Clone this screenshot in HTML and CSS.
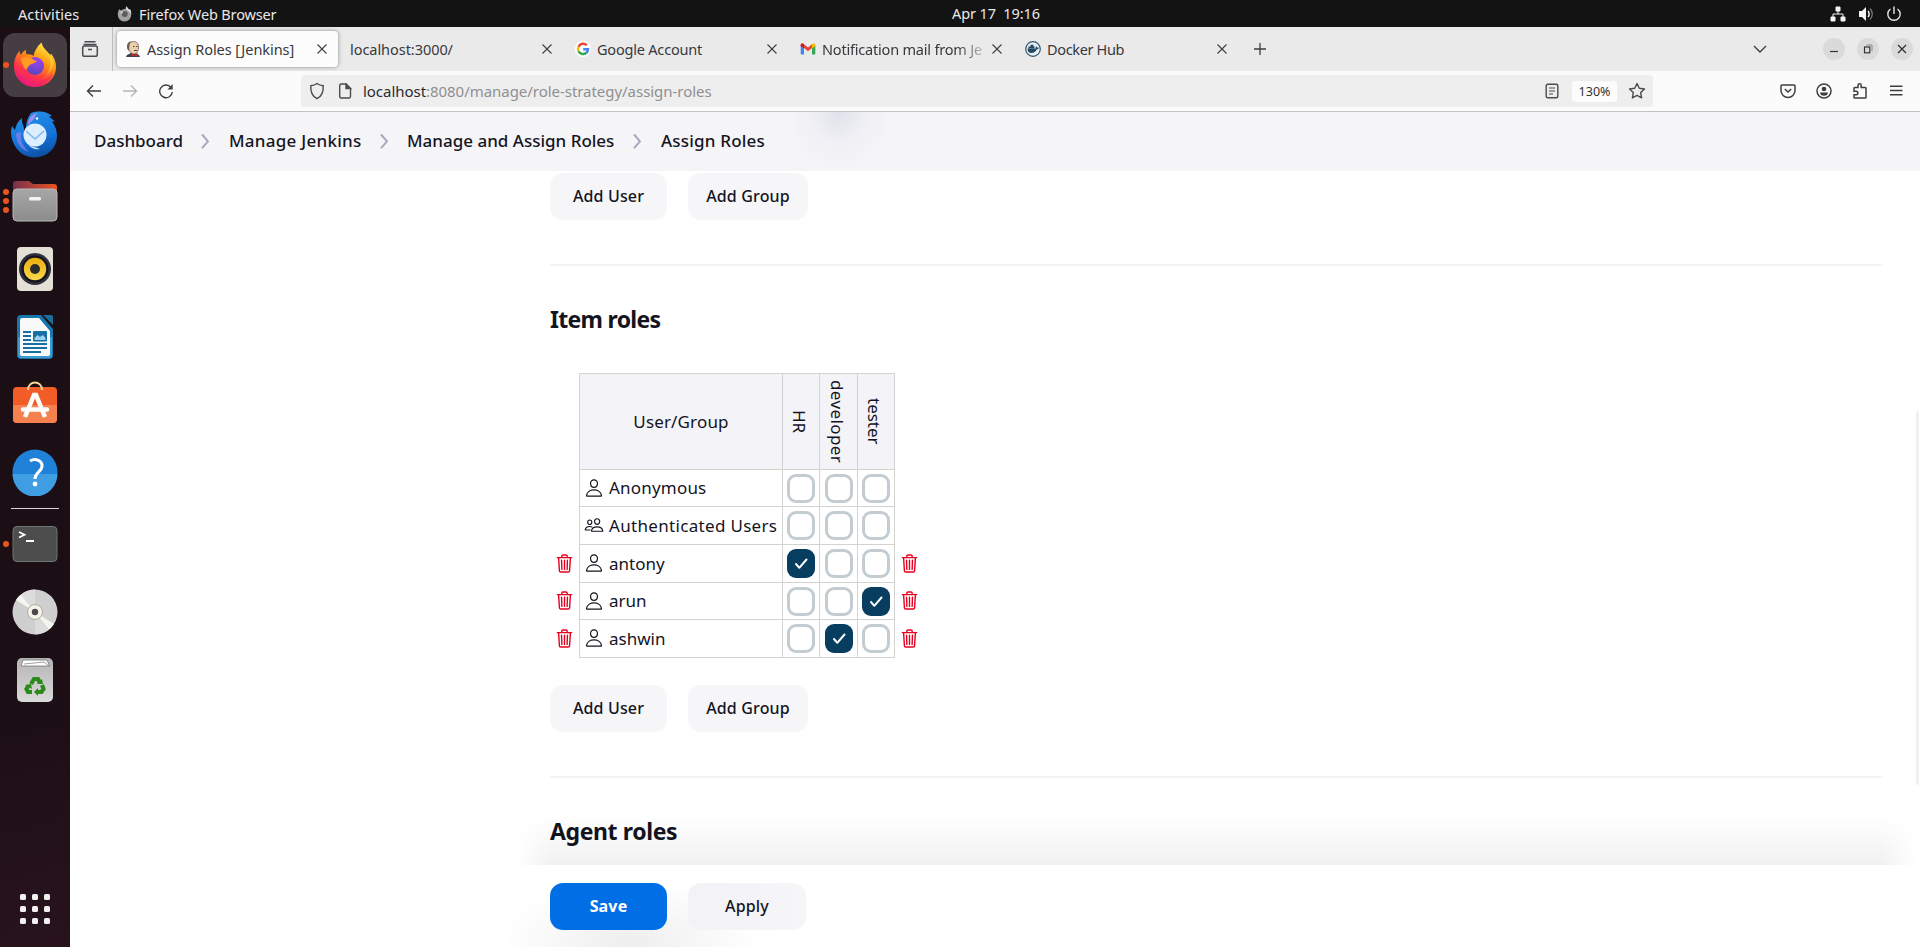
FILE: index.html
```html
<!DOCTYPE html>
<html lang="en">
<head>
<meta charset="utf-8">
<title>Assign Roles [Jenkins]</title>
<link rel="stylesheet" href="styles.css">
</head>
<body>
<svg class="defs" width="0" height="0">
  <defs>
    <symbol id="x" viewBox="0 0 16 16"><path d="M3.500 3.500l9 9M12.500 3.500l-9 9" fill="none" stroke="currentColor" stroke-width="1.100"/></symbol>
    <symbol id="person" viewBox="0 0 512 512"><path d="M344 144c-3.920 52.870-44 96-88 96s-84.150-43.120-88-96c-4-55 35-96 88-96s92 42 88 96zM256 304c-87 0-175.300 48-191.640 138.600C62.390 453.520 68.570 464 80 464h352c11.440 0 17.620-10.480 15.650-21.400C431.300 352 343 304 256 304z" fill="none" stroke="currentColor" stroke-width="30" stroke-linejoin="round"/></symbol>
    <symbol id="people" viewBox="0 0 512 512"><path d="M402 168c-2.930 40.670-33.100 72-66 72s-63.120-31.320-66-72c-3-42.310 26.370-72 66-72s69 30.460 66 72zM336 304c-65.170 0-127.840 32.370-143.540 95.410-2.080 8.340 3.150 16.590 11.720 16.590h263.650c8.570 0 13.770-8.250 11.720-16.590C463.850 335.360 401.180 304 336 304z" fill="none" stroke="currentColor" stroke-width="30"/><path d="M200 185.940c-2.340 32.480-26.720 58.060-53 58.060s-50.700-25.570-53-58.060C91.610 152.150 115.340 128 147 128s55.390 24.770 53 57.940zM206 306c-18.050-8.270-37.930-11.450-59-11.450-52 0-102.100 25.850-114.650 76.200-1.650 6.660 2.530 13.250 9.370 13.250H154" fill="none" stroke="currentColor" stroke-width="30" stroke-linecap="round"/></symbol>
    <symbol id="bin" viewBox="0 0 512 512"><path d="M112 112l20 320c.950 18.490 14.400 32 32 32h184c17.670 0 30.870-13.510 32-32l20-320M80 112h352M192 112V72a23.930 23.930 0 0124-24h80a23.930 23.930 0 0124 24v40M256 176v224M184 176l8 224M328 176l-8 224" fill="none" stroke="currentColor" stroke-width="34" stroke-linecap="round" stroke-linejoin="round"/></symbol>
    <symbol id="chev" viewBox="0 0 12 20"><path d="M2.500 4l5.500 6.300-5.500 6.300" fill="none" stroke="#a9a7bd" stroke-width="2" stroke-linecap="round" stroke-linejoin="round"/></symbol>
    <linearGradient id="ffg" x1=".8" y1="0" x2=".25" y2="1"><stop offset="0" stop-color="#fff44f"/><stop offset=".38" stop-color="#ff980e"/><stop offset=".7" stop-color="#ff3647"/><stop offset="1" stop-color="#e31587"/></linearGradient>
    <radialGradient id="ffp" cx=".6" cy=".2" r=".9"><stop offset="0" stop-color="#a340f0"/><stop offset="1" stop-color="#4b49b5"/></radialGradient>
    <linearGradient id="tbg" x1=".3" y1="0" x2=".6" y2="1"><stop offset="0" stop-color="#2490e8"/><stop offset=".6" stop-color="#1373d9"/><stop offset="1" stop-color="#0c4fa0"/></linearGradient>
    <linearGradient id="fold" x1="0" y1="0" x2="1" y2="0"><stop offset="0" stop-color="#77304f"/><stop offset="1" stop-color="#e9541f"/></linearGradient>
    <linearGradient id="gray" x1="0" y1="0" x2="0" y2="1"><stop offset="0" stop-color="#a7a7a7"/><stop offset="1" stop-color="#8b8b8b"/></linearGradient>
    <linearGradient id="gold" x1="0" y1="0" x2="0" y2="1"><stop offset="0" stop-color="#e9ae10"/><stop offset="1" stop-color="#f9d84a"/></linearGradient>
    <linearGradient id="lite" x1="0" y1="0" x2="0" y2="1"><stop offset="0" stop-color="#b4b4b4"/><stop offset="1" stop-color="#dadada"/></linearGradient>
  </defs>
</svg>

<header class="topbar">
  <span class="activities">Activities</span>
  <svg class="topfox" viewBox="0 0 16 16"><path d="M8 15.500A6.700 6.700 0 0 1 1.300 8.500C1.300 6 2 4 3.200 3l.6 1.500L5.500 4C7 3 8 3 9 3.200 9 2 9.500 1 10.300.3c.3 1.500 1.500 2.500 2.500 3.500l.7-.6c1 1.500 1.300 3.500 1.200 5.300A6.700 6.700 0 0 1 8 15.500z" fill="#a2a2a2"/><path d="M10.300.3c.3 1.500 1.500 2.500 2.500 3.500l.7-.6c1 1.500 1.300 3.500 1.200 5.300-.5-2.500-3-3.500-5-5 0-1.200 0-2 .6-3.200z" fill="#e0e0e0"/><circle cx="8.300" cy="8" r="2.900" fill="#5c5c5c"/><path d="M3 5l4 .8-2 2.200z" fill="#ccc"/></svg>
  <span class="appname">Firefox Web Browser</span>
  <span class="clock">Apr 17&nbsp; 19:16</span>
  <span class="tray">
    <svg width="16" height="16" viewBox="0 0 16 16"><path d="M6 1h4v4H6zM1 11h4v4H1zM11 11h4v4h-4z" fill="#f5f5f5" stroke="#f5f5f5" stroke-width="1" stroke-linejoin="round"/><path d="M8 5v3M3 11V8h10v3" fill="none" stroke="#f5f5f5"/></svg>
    <svg width="16" height="16" viewBox="0 0 16 16"><path d="M1 5h3l4-4v14l-4-4H1z" fill="#f5f5f5"/><path d="M10 5c1.500 1.500 1.500 4.500 0 6" fill="none" stroke="#f5f5f5" stroke-width="1.500"/><path d="M12 2.500c3 3 3 8 0 11" fill="none" stroke="#777" stroke-width="1.300"/></svg>
    <svg width="16" height="16" viewBox="0 0 16 16"><path d="M4.500 3a6.200 6.200 0 1 0 7 0M8 .5v7.500" fill="none" stroke="#e8e8e8" stroke-width="1.400"/></svg>
  </span>
</header>

<div class="desktop">
  <nav class="dock">
    <div class="slot active"><i class="dots"><b></b></i>
      <svg viewBox="0 0 48 48"><path d="M24 46C12 46 3 37 3 25.500 3 19 5 13.500 8.500 10c.3 2 .8 3 1.500 4 1.500-3 3.500-4.500 5-5-.5 2 0 3.500 1 4.500 3-.5 5 .5 6.500 1.500 1-5 3.500-9.500 8-13.500 1 5 4.500 7.500 7.500 11l1 2.500 1-2.500c3 4 5 8 5 13C45 37 36 46 24 46z" fill="url(#ffg)"/><path d="M37 13c4 7 3 15-1 20 6-4 9-12 3-20z" fill="#ffd33a" opacity=".7"/><circle cx="24" cy="25" r="9" fill="url(#ffp)"/><path d="M10 17c5-2 10-1 13 2 2 1 3 1 2 2-2 2-5 1-7 4-1 1-2 2-3 4-3-3-5-8-5-12z" fill="#ff9a22"/><path d="M6 30c4 11 25 16 36 2-3 9-10 13-18 13S9 40 6 30z" fill="#ee2070" opacity=".55"/></svg></div>
    <div class="slot"><svg class="bird" viewBox="0 0 48 48"><path d="M20 2c9-3 17-1 21 3l-3 .5 6 5-3 0c7 9 6 20 1 27-9 12-29 12-37-1C0 29-1 22 1 15l3 4c1-5 3-9 7-12-1 6 3 8 2 13l2 3c-1-8 1-16 5-21z" fill="url(#tbg)"/><path d="M17 14c0-7 4-11 10-12-4 3-3 6-6 8z" fill="#a48df0"/><circle cx="26" cy="7.500" r="1.200" fill="#fff"/><path d="M5 22c0 10 5 17 13 19-6-5-9-12-8-20z" fill="#8b83ee" opacity=".7"/><circle cx="24" cy="24" r="11.500" fill="#dceeff"/><path d="M15 20l9 8 9-8" fill="none" stroke="#7fb6ea" stroke-width="1.500"/><path d="M17 33c4 3 8 3 12 5-5 1-10-1-12-5z" fill="#b8dcfb"/></svg></div>
    <div class="slot"><i class="dots"><b></b><b></b><b></b></i><svg viewBox="0 0 48 48"><path d="M2 20V7a3 3 0 0 1 3-3h13l4 3h21a3 3 0 0 1 3 3v12z" fill="url(#fold)"/><rect x="2" y="12" width="44" height="32" rx="4" fill="url(#gray)" stroke="#b9b9b9"/><rect x="18" y="20" width="12" height="3.500" rx="1.500" fill="#f4f4f4"/></svg></div>
    <div class="slot"><svg viewBox="0 0 48 48"><rect x="6" y="2" width="36" height="44" rx="4" fill="#e4e0d6"/><circle cx="24" cy="24" r="16" fill="#30303a"/><circle cx="24" cy="24" r="13.500" fill="#141420"/><circle cx="24" cy="24" r="11.200" fill="url(#gold)"/><circle cx="24" cy="24" r="5" fill="#2c2c2c"/></svg></div>
    <div class="slot"><svg viewBox="0 0 48 48"><path d="M10 2h20l12 14v26a4 4 0 0 1-4 4H10a4 4 0 0 1-4-4V6a4 4 0 0 1 4-4z" fill="#1577ae"/><path d="M7 24h34v18a3 3 0 0 1-3 3H10a3 3 0 0 1-3-3z" fill="#3c9bcf"/><path d="M32 2h8a2 2 0 0 1 2 2v8z" fill="#1a6d9f"/><path d="M11 5h17l11 13v23a2 2 0 0 1-2 2H11a2 2 0 0 1-2-2V7a2 2 0 0 1 2-2z" fill="#f7f9fa"/><path d="M12 19h8M12 23h8M12 27h8M12 31h24M12 35h24M12 39h18" stroke="#1670a4" stroke-width="1.900"/><rect x="22" y="18" width="14" height="10.500" rx="1" fill="#1670a4"/><path d="M23.500 27v-2l3-3 2.500 2 3-2 2.500 3v2z" fill="#9fd2f0"/></svg></div>
    <div class="slot"><svg class="bag" viewBox="0 0 48 48"><rect x="2" y="8" width="44" height="36" rx="4" fill="#f15c27"/><path d="M2 26h44v14a4 4 0 0 1-4 4H6a4 4 0 0 1-4-4z" fill="#f4814e"/><path d="M17 11c0-10 14-10 14 0" fill="none" stroke="#f4d596" stroke-width="2"/><path d="M14 38l9-22h2l9 22" fill="none" stroke="#fff" stroke-width="4.500"/><path d="M12 30.500h24" stroke="#fff" stroke-width="4.500" stroke-linecap="round"/></svg></div>
    <div class="slot"><svg class="help" viewBox="0 0 48 48"><circle cx="24" cy="24" r="22.500" fill="#1f82d8"/><path d="M1.500 26h45a22.500 22.500 0 0 1-45 0z" fill="#3f9de2"/><path d="M19 13c5-3 12-1 12 5 0 6-7 6-7 13" fill="none" stroke="#fff" stroke-width="3"/><circle cx="24" cy="36" r="2.400" fill="#fff"/></svg></div>
    <hr>
    <div class="slot"><i class="dots"><b></b></i><svg viewBox="0 0 48 48"><rect x="2" y="6.500" width="44" height="35" rx="4" fill="#4d4d4d" stroke="#6f756f"/><path d="M8 12l5.500 2.700L8 17.500M15 21h8" fill="none" stroke="#fff" stroke-width="1.800"/></svg></div>
    <div class="slot"><svg viewBox="0 0 48 48"><circle cx="24" cy="24" r="22.500" fill="#cfcfcf"/><path d="M24 24L5 12A22.500 22.500 0 0 1 10 6.500zM24 24l19 12a22 22 0 0 1-5 5.500z" fill="#f5f5f0"/><path d="M24 24V1.500A22.500 22.500 0 0 0 10 6.500zM24 24v22.500a22.500 22.500 0 0 0 14-5z" fill="#dcdcdc"/><circle cx="24" cy="24" r="7.500" fill="#f4f2ec" stroke="#b5ab92"/><circle cx="24" cy="24" r="3.200" fill="#4a4a4a"/></svg></div>
    <div class="slot"><svg viewBox="0 0 48 48"><rect x="6" y="2" width="36" height="44" rx="5" fill="url(#lite)"/><path d="M10 10l2-6h24l2.500 6z" fill="#fff" stroke="#777" stroke-width=".8"/><path d="M13 8l20-2 5 4" fill="none" stroke="#888" stroke-width=".8"/><g fill="none" stroke="#2c8a1d" stroke-width="4.200"><path d="M20 28l3-5h4l2 4M31 29l1.500 4-2 3H25M21 36h-4l-1.500-3 2-3.500"/></g><path d="M26 28l6 0-1-5zM27 32v8l-4-4zM14 29l6-1 1 5z" fill="#2c8a1d"/></svg></div>
    <svg class="apps" viewBox="0 0 30 30"><g fill="#f2f1ef"><rect width="6" height="6" rx="1.500"/><rect x="12" width="6" height="6" rx="1.500"/><rect x="24" width="6" height="6" rx="1.500"/><rect y="12" width="6" height="6" rx="1.500"/><rect x="12" y="12" width="6" height="6" rx="1.500"/><rect x="24" y="12" width="6" height="6" rx="1.500"/><rect y="24" width="6" height="6" rx="1.500"/><rect x="12" y="24" width="6" height="6" rx="1.500"/><rect x="24" y="24" width="6" height="6" rx="1.500"/></g></svg>
  </nav>

  <div class="window">
    <div class="tabstrip">
      <div class="tabview"><svg width="18" height="18" viewBox="0 0 18 18" fill="none" stroke="#4b4b50" stroke-width="1.500"><path d="M3.500 1.800h11M2.500 4.600h13"/><rect x="1.700" y="6" width="14.600" height="10.300" rx="1.800"/><path d="M7 9.500h4"/></svg></div>
      <div class="tab selected">
        <svg class="fav" viewBox="0 0 16 16"><path d="M1 16l1-2 4-2h5l3 2 1 2z" fill="#39414f"/><path d="M3 6c0-3 2-5.500 5.500-5.500S14 3 13.500 7s-2 6-4.500 6-5-2-6-7z" fill="#e9cfae" stroke="#5b4a3c" stroke-width=".7"/><path d="M2 6C2 2 4 .7 6 .6 4.500 2 4.500 5 4 9.500 3 9.500 2 8 2 6z" fill="#6b5d52"/><path d="M6.500 12.500l3 1 3-1v3l-3-1-3 1z" fill="#cf2a2a"/><path d="M8 5.500h1.500M11 5.500h1.500M9 9.500h3" stroke="#453326" stroke-width=".9"/></svg>
        <span class="label t1">Assign Roles [Jenkins]</span><svg class="close"><use href="#x"/></svg></div>
      <div class="tab"><span class="label t2">localhost:3000/</span><svg class="close"><use href="#x"/></svg></div>
      <div class="tab">
        <svg class="fav" viewBox="0 0 16 16"><circle cx="8" cy="8" r="8" fill="#fff"/><g fill="none" stroke-width="2.500"><path d="M11.800 4.200A5.100 5.100 0 0 0 3.500 5.700" stroke="#ea4335"/><path d="M3.500 5.700a5.100 5.100 0 0 0 0 4.600" stroke="#fbbc05"/><path d="M3.500 10.300a5.100 5.100 0 0 0 7.900 1.500" stroke="#34a853"/><path d="M11.400 11.800A5 5 0 0 0 13 8.300H8.200" stroke="#4285f4"/></g></svg>
        <span class="label t3">Google Account</span><svg class="close"><use href="#x"/></svg></div>
      <div class="tab">
        <svg class="fav" viewBox="0 0 16 16"><path d="M.7 4v8.500a1 1 0 0 0 1 1H4V6z" fill="#4285f4"/><path d="M15.300 4v8.500a1 1 0 0 1-1 1H12V6z" fill="#34a853"/><path d="M.7 4C.7 2.500 2.300 2 3.300 2.800L8 6.400l4.700-3.600L12 7 8 10.200 4 7 .7 5z" fill="#ea4335"/><path d="M12 3.300l.7-.5c1-.8 2.600-.3 2.600 1.200v1L12 7.500z" fill="#fbbc04"/><path d="M.7 4c0-1.500 1.600-2 2.600-1.200l.7.500v4.200L.7 5z" fill="#c5221f"/></svg>
        <span class="label t4">Notification mail from Je</span><svg class="close"><use href="#x"/></svg></div>
      <div class="tab">
        <svg class="fav" viewBox="0 0 16 16"><circle cx="8" cy="8" r="7.300" fill="#e6eef2" stroke="#31566d" stroke-width="1.200"/><path d="M2.500 7.500h8.300c.2-.8 0-1.500-.3-2 .8-.3 1.500.3 1.700 1.200.7-.2 1.300 0 1.600.2-.4 1-1.300 1.300-2 1.300-1 2.600-3 3.800-5.300 3.800-2.500 0-4-1.200-4-4.500z" fill="#204a62"/><path d="M3.500 5.500h6v2h-6zM5.500 3.800h3v1.700h-3z" fill="#204a62"/></svg>
        <span class="label t5">Docker Hub</span><svg class="close"><use href="#x"/></svg></div>
      <svg class="plus" width="16" height="16" viewBox="0 0 16 16"><path d="M8 2v12M2 8h12" stroke="#3e3e42" stroke-width="1.300"/></svg>
      <svg class="alltabs" width="16" height="16" viewBox="0 0 16 16"><path d="M2 5l6 6 6-6" fill="none" stroke="#3e3e42" stroke-width="1.400"/></svg>
      <div class="winbtns">
        <span><svg width="12" height="12" viewBox="0 0 12 12"><path d="M2 8.500h8" stroke="#333" stroke-width="1.200"/></svg></span>
        <span><svg width="12" height="12" viewBox="0 0 12 12"><path d="M4.500 2h5.500v6" fill="none" stroke="#888"/><rect x="2.500" y="4" width="5.300" height="5.800" fill="none" stroke="#333" stroke-width="1.200"/></svg></span>
        <span><svg width="12" height="12" viewBox="0 0 12 12"><path d="M2 2l8 8M10 2l-8 8" stroke="#333" stroke-width="1.300"/></svg></span>
      </div>
    </div>

    <div class="toolbar">
      <div class="navbtns">
        <svg viewBox="0 0 16 16"><path d="M15 8H2M7 2.500L1.500 8 7 13.500" stroke="#3e3e42"/></svg>
        <svg viewBox="0 0 16 16"><path d="M1 8h13M9 2.500L14.500 8 9 13.500" stroke="#b4b4b6"/></svg>
        <svg viewBox="0 0 16 16"><path d="M13 4.500A6.300 6.300 0 1 0 14.300 9" stroke="#3e3e42"/><path d="M14.700 1v5.500H9.500z" fill="#3e3e42" stroke="none"/></svg>
      </div>
      <div class="urlbar">
        <svg class="shield" width="16" height="18" viewBox="0 0 16 18"><path d="M8 1.500c2 1.500 4 2 6.200 2.200.4 6-1.200 10.500-6.200 13-5-2.500-6.600-7-6.200-13C4 3.500 6 3 8 1.500z"/></svg>
        <svg class="page" width="14" height="16" viewBox="0 0 14 16"><path d="M1.700 2.500a1.500 1.500 0 0 1 1.500-1.500H8l4.500 4.500v8a1.500 1.500 0 0 1-1.500 1.500H3.200a1.500 1.500 0 0 1-1.500-1.500z"/><path d="M8 1v4.500h4.500z" fill="#4b4b50"/></svg>
        <span class="url"><b>localhost</b>:8080/manage/role-strategy/assign-roles</span>
        <svg class="reader" width="14" height="16" viewBox="0 0 14 16"><rect x="1.200" y="1.200" width="11.600" height="13.600" rx="1.500"/><path d="M4 5h6M4 8h6M4 11h4" stroke-width="1.200"/></svg>
        <span class="zoom">130%</span>
        <svg class="star" width="18" height="18" viewBox="0 0 18 18"><path d="M9 1.500l2.300 4.800 5.200.7-3.800 3.600.9 5.300L9 13.400l-4.600 2.500.9-5.300L1.500 7l5.200-.7z" stroke-linejoin="round"/></svg>
      </div>
      <div class="tools">
        <svg viewBox="0 0 16 16"><path d="M2 2h12a1 1 0 0 1 1 1v4.500a7 7 0 0 1-14 0V3a1 1 0 0 1 1-1zM4.800 6L8 9l3.200-3"/></svg>
        <svg viewBox="0 0 16 16"><circle cx="8" cy="8" r="7"/><circle cx="8" cy="6" r="2.300" fill="#3e3e42" stroke="none"/><path d="M4 9.500h8c0 2-1.700 3.300-4 3.300S4 11.500 4 9.500z" fill="#3e3e42" stroke="none"/></svg>
        <svg viewBox="0 0 16 16"><path d="M2 7.200V5.300a.8.800 0 0 1 .8-.8H6V2.400a1.600 1.600 0 0 1 3.200 0v2.100h4a.8.800 0 0 1 .8.800v8.900a.8.800 0 0 1-.8.800H2.800a.8.800 0 0 1-.8-.8v-2.500h2.100a1.600 1.600 0 0 0 0-3.500H2z"/></svg>
        <svg viewBox="0 0 16 16"><path d="M2 3.200h12.500M2 7.500h12.500M2 11.800h12.500"/></svg>
      </div>
    </div>

    <div class="crumbs">
      <span class="c1">Dashboard</span><svg><use href="#chev"/></svg>
      <span class="c2">Manage Jenkins</span><svg><use href="#chev"/></svg>
      <span class="c3">Manage and Assign Roles</span><svg><use href="#chev"/></svg>
      <span class="c4">Assign Roles</span>
    </div>

    <main class="content">
      <div class="btnrow"><button class="user">Add User</button><button class="group">Add Group</button></div>
      <section>
        <h2 class="h-item">Item roles</h2>
        <div class="matrix">
          <div class="side"></div><div class="th ug">User/Group</div><div class="th v">HR</div><div class="th v dev">developer</div><div class="th v">tester</div><div class="side r"></div>
          <div class="side"></div><div class="td"><svg><use href="#person"/></svg><span class="n1">Anonymous</span></div><div class="cb"><i></i></div><div class="cb"><i></i></div><div class="cb"><i></i></div><div class="side r"></div>
          <div class="side"></div><div class="td"><svg><use href="#people"/></svg><span class="n2">Authenticated Users</span></div><div class="cb"><i></i></div><div class="cb"><i></i></div><div class="cb"><i></i></div><div class="side r"></div>
          <div class="side"><svg><use href="#bin"/></svg></div><div class="td"><svg><use href="#person"/></svg><span class="n3">antony</span></div><div class="cb"><i class="on"><svg viewBox="0 0 28 28"><path d="M9 15l3.300 3.800 7.200-8.300"/></svg></i></div><div class="cb"><i></i></div><div class="cb"><i></i></div><div class="side r"><svg><use href="#bin"/></svg></div>
          <div class="side"><svg><use href="#bin"/></svg></div><div class="td"><svg><use href="#person"/></svg><span class="n4">arun</span></div><div class="cb"><i></i></div><div class="cb"><i></i></div><div class="cb"><i class="on"><svg viewBox="0 0 28 28"><path d="M9 15l3.300 3.800 7.200-8.300"/></svg></i></div><div class="side r"><svg><use href="#bin"/></svg></div>
          <div class="side"><svg><use href="#bin"/></svg></div><div class="td last"><svg><use href="#person"/></svg><span class="n5">ashwin</span></div><div class="cb last"><i></i></div><div class="cb last"><i class="on"><svg viewBox="0 0 28 28"><path d="M9 15l3.300 3.800 7.200-8.300"/></svg></i></div><div class="cb last"><i></i></div><div class="side r"><svg><use href="#bin"/></svg></div>
        </div>
        <div class="btnrow second"><button class="user">Add User</button><button class="group">Add Group</button></div>
      </section>
      <section><h2 class="h-agent">Agent roles</h2></section>
      <div class="footer"><button class="save">Save</button><button class="apply">Apply</button></div>
      <div class="scroll"></div>
    </main>
  </div>
</div>
</body>
</html>
```
FILE: styles.css
```css
* { box-sizing: border-box; }
body { margin: 0; width: 1920px; height: 947px; overflow: hidden; background: #fff; color: #14141f; font-family: "Noto Sans", "Open Sans", sans-serif; font-size: 14px; }
svg { display: block; flex: none; }
.defs { position: absolute; }

.topbar { position: relative; display: flex; align-items: center; height: 27px; background: #131313; color: #e9e9e9; padding: 0 18px; font-size: 14.5px; white-space: nowrap; }
.activities { width: 98px; letter-spacing: 0.1px; }
.appname { letter-spacing: -0.15px; }
.topfox { width: 17px; height: 16px; margin-right: 6px; }
.clock { position: absolute; left: 952px; top: 3px; letter-spacing: -0.1px; }
.tray { display: flex; gap: 12px; margin-left: auto; }

.desktop { display: flex; height: 920px; }
.dock { width: 70px; background: linear-gradient(165deg, #1b0e15 70%, #28131d); display: flex; flex-direction: column; align-items: center; padding-top: 4px; }
.slot { position: relative; width: 64px; height: 64px; margin: 2px 0; border-radius: 12px; display: flex; align-items: center; justify-content: center; }
.slot.active { background: #463d42; }
.slot svg { width: 48px; height: 48px; }
.slot .bird { margin-top: 3px; }
.slot .bag { margin-bottom: 5px; }
.slot .help { margin-bottom: 2px; }
.dots { position: absolute; left: 0; top: 0; bottom: 0; width: 6px; display: flex; flex-direction: column; justify-content: center; gap: 3px; }
.dots b { width: 6px; height: 6px; border-radius: 50%; background: #e95420; }
.dock hr { width: 48px; height: 1px; margin: 1px 0; border: 0; background: #d9d6d8; flex: none; }
.apps { width: 30px; height: 30px; margin-top: auto; margin-bottom: 23px; }

.window { width: 1850px; display: flex; flex-direction: column; }
.tabstrip { display: flex; align-items: center; height: 44px; background: #eaeaea; color: #38383d; }
.tabview { width: 43px; height: 44px; border-right: 1px solid #bcbcbc; margin-right: 2px; display: flex; align-items: center; padding-left: 11px; }
.tab { display: flex; align-items: center; height: 36px; width: 221px; margin: 0 2px; padding: 0 8px; }
.tab.selected { background: #fcfcfc; border-radius: 4px; box-shadow: 0 0 4px rgba(0,0,0,.4); }
.fav { width: 16px; height: 16px; margin: 0 6px 0 0; }
.label { flex: 1; min-width: 0; white-space: nowrap; font-size: 14.5px; letter-spacing: -0.05px; }
.close { width: 16px; height: 16px; color: #3e3e42; }
.t3 { letter-spacing: -0.2px; }
.t4 { letter-spacing: -0.2px; -webkit-mask-image: linear-gradient(90deg, #000 80%, transparent 102%); mask-image: linear-gradient(90deg, #000 80%, transparent 102%); }
.t5 { letter-spacing: -0.35px; }
.plus { margin-left: 12px; }
.alltabs { margin-left: 484px; }
.winbtns { display: flex; gap: 12px; margin-left: 55px; }
.winbtns span { width: 22px; height: 22px; border-radius: 50%; background: #dadada; display: flex; align-items: center; justify-content: center; }

.toolbar { display: flex; align-items: center; height: 41px; background: #fbfbfb; border-bottom: 1px solid #c2c2c5; }
.navbtns { display: flex; gap: 20px; padding-left: 16px; width: 231px; }
.navbtns svg { width: 16px; height: 16px; fill: none; stroke-width: 1.4; }
.urlbar { width: 1352px; height: 32px; background: #eee; border-radius: 4px; display: flex; align-items: center; padding-left: 8px; }
.urlbar svg { fill: none; stroke: #4b4b50; stroke-width: 1.4; }
.page { margin-left: 13px; }
.url { margin-left: 11px; color: #8f8f93; font-size: 15px; letter-spacing: -0.04px; }
.url b { font-weight: 400; color: #2a2a2e; }
.reader { margin-left: auto; }
.zoom { width: 45px; height: 21px; margin: 0 11px 0 13px; border-radius: 3px; background: #fcfcfc; font-size: 12.5px; line-height: 21px; text-align: center; color: #333; }
.star { margin-right: 7px; }
.tools { display: flex; gap: 20px; margin-left: auto; padding-right: 16px; }
.tools svg { width: 16px; height: 16px; fill: none; stroke: #3e3e42; stroke-width: 1.5; }

.crumbs { display: flex; align-items: center; height: 59px; flex: none; padding: 0 0 2px 24px; background: radial-gradient(ellipse 52px 58px at 769px 0, #dfe2e9, rgba(233,234,241,.5) 50%, transparent), #f5f5f8; font-size: 17px; font-weight: 500; white-space: nowrap; }
.crumbs svg { width: 12px; height: 20px; }
.crumbs .c1 { width: 106px; }
.crumbs svg + span { margin-left: 17px; }
.crumbs .c2 { width: 150px; letter-spacing: 0.26px; }
.crumbs .c3 { width: 224px; margin-left: 16px; margin-right: 1px; }
.crumbs .c4 { letter-spacing: 0.2px; }

.content { position: relative; height: 776px; padding: 2px 37px 0 480px; }
button { border: 0; height: 47px; border-radius: 13px; background: #f6f6f9; color: #14141f; font: 500 16px "Noto Sans", "Open Sans", sans-serif; letter-spacing: 0.15px; padding: 0 0 2px; }
.btnrow { display: flex; gap: 21px; height: 91px; }
.user, .save { width: 117px; }
.group { width: 120px; }
.apply { width: 118px; }
section { border-top: 2px solid #f3f3f8; }
h2 { margin: 36px 0 0; height: 35px; line-height: 35px; font-size: 23px; font-weight: 700; }
.h-item { letter-spacing: -0.7px; }
.h-agent { letter-spacing: -0.38px; }
.matrix { display: grid; width: max-content; margin-top: 36px; grid-template-columns: 29px 203px 37px 38px 37px 30px; grid-template-rows: 96px 37px 38px 38px 37px 39px; font-size: 17px; }
.th, .td, .cb { border-left: 1px solid #d3d4cf; border-top: 1px solid #d3d4cf; display: flex; align-items: center; }
.last { border-bottom: 1px solid #d3d4cf; }
.th { background: #f3f3f8; justify-content: center; }
.ug { letter-spacing: 0.15px; }
.v { writing-mode: vertical-rl; padding-right: 3px; }
.dev { letter-spacing: 0.4px; }
.td { padding-left: 4px; padding-bottom: 1px; white-space: nowrap; }
.td svg { width: 20px; height: 20px; margin-right: 5px; }
.n1 { letter-spacing: 0.2px; }
.n2 { letter-spacing: 0.32px; }
.cb { justify-content: center; }
.cb i { width: 28px; height: 29px; border: 3px solid #c3ccd1; border-radius: 9px; }
.cb .on { background: #073d5f; border: 0; }
.on svg { width: 28px; height: 28px; fill: none; stroke: #fff; stroke-width: 2; stroke-linecap: round; stroke-linejoin: round; }
.side { display: flex; align-items: center; justify-content: center; color: #e6001f; }
.side svg { width: 21px; height: 21px; }
.side.r { border-left: 1px solid #d3d4cf; }
.second { margin-top: 27px; }
.footer { position: absolute; left: 480px; right: 37px; bottom: 0; height: 82px; display: flex; gap: 21px; padding-top: 18px; }
.footer::after { content: ""; position: absolute; z-index: -1; left: -40px; top: 12px; width: 290px; height: 70px; background: radial-gradient(ellipse 130px 60px at 120px 64px, #eeeeef, transparent); }
.footer::before { content: ""; position: absolute; left: -34px; right: -34px; top: -50px; height: 50px; background: linear-gradient(transparent, rgba(0,0,0,.055)); -webkit-mask-image: linear-gradient(90deg, transparent, #000 36px, #000 calc(100% - 36px), transparent); mask-image: linear-gradient(90deg, transparent, #000 36px, #000 calc(100% - 36px), transparent); }
.save { background: #006fe6; color: #fff; font-weight: 700; }
.apply { background: linear-gradient(90deg, #f2f2f7, #f6f6f9); }
.scroll { position: absolute; right: 1px; top: 240px; width: 3px; height: 374px; border-radius: 2px; background: #f1f1f2; }
```
